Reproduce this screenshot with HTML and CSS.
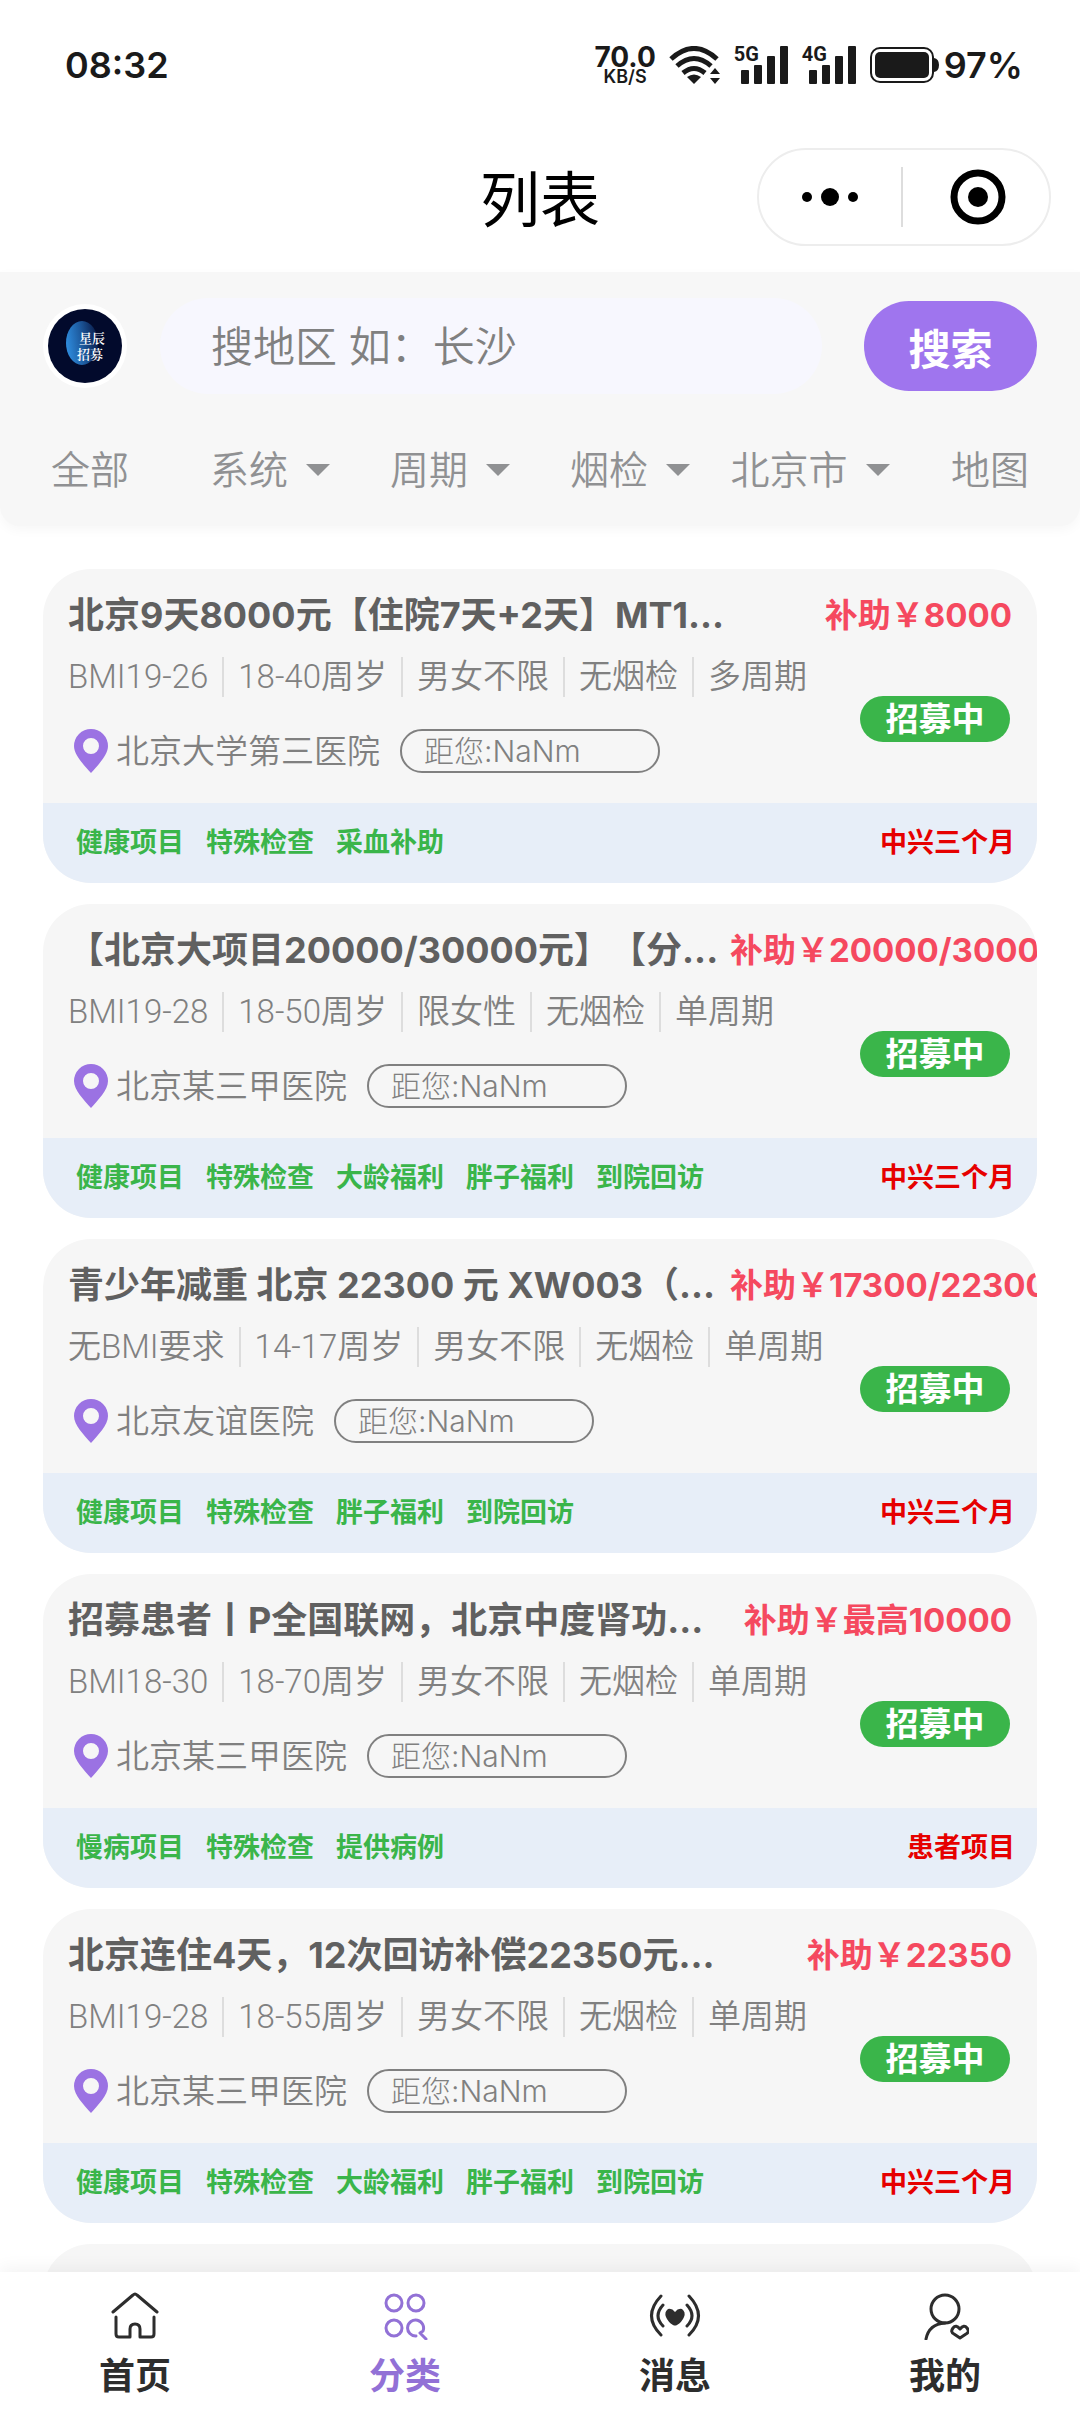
FILE: index.html
```html
<!DOCTYPE html>
<html lang="zh-CN">
<head>
<meta charset="utf-8">
<meta name="viewport" content="width=device-width, initial-scale=1">
<title>列表</title>
<link rel="stylesheet" href="styles.css">
</head>
<body>
<div class="app">
  <header class="top">
    <div class="statusbar">
      <time class="clock">08:32</time>
      <div class="indicators">
        <div class="speed"><b>70.0</b><span>KB/S</span></div>
        <svg class="wifi" width="52" height="38" viewBox="0 0 52 38" fill="none" stroke="#1a1a1a" stroke-width="5">
          <path d="M2 13Q25-8 48 13M8 20Q25 5 42 20M14 27Q25 18 36 27"/>
          <path d="M18 31Q25 26 32 31L25 38Z" fill="#1a1a1a" stroke="none"/>
          <path d="M41 28L46 22L51 28ZM41 32L46 38L51 32Z" fill="#1a1a1a" stroke="none"/>
        </svg>
        <div class="signal"><span class="net">5G</span>
          <svg width="48" height="38" viewBox="0 0 48 38" fill="#1a1a1a"><rect y="24" width="8" height="14" rx="1"/><rect x="13" y="19" width="8" height="19" rx="1"/><rect x="26" y="10" width="8" height="28" rx="1"/><rect x="39" y="0" width="8" height="38" rx="1"/></svg>
        </div>
        <div class="signal"><span class="net">4G</span>
          <svg width="48" height="38" viewBox="0 0 48 38" fill="#1a1a1a"><rect y="24" width="8" height="14" rx="1"/><rect x="13" y="19" width="8" height="19" rx="1"/><rect x="26" y="10" width="8" height="28" rx="1"/><rect x="39" y="0" width="8" height="38" rx="1"/></svg>
        </div>
        <svg class="battery" width="69" height="36" viewBox="0 0 69 36"><rect x="1" y="1" width="62" height="34" rx="9" fill="none" stroke="#1a1a1a" stroke-width="2"/><rect x="5" y="5" width="54" height="26" rx="5" fill="#1a1a1a"/><path d="M64 11Q69 12 69 18Q69 24 64 25Z" fill="#1a1a1a"/></svg>
        <span class="percent">97%</span>
      </div>
    </div>
    <div class="navbar">
      <h1>列表</h1>
      <div class="capsule">
        <button type="button" aria-label="更多"><svg width="58" height="20" viewBox="0 0 58 20"><circle cx="6" cy="10" r="5"/><circle cx="29" cy="10" r="9"/><circle cx="52" cy="10" r="5"/></svg></button>
        <button type="button" aria-label="关闭"><svg width="56" height="56" viewBox="0 0 56 56"><circle cx="28" cy="28" r="24" fill="none" stroke="#000" stroke-width="7"/><circle cx="28" cy="28" r="10"/></svg></button>
      </div>
    </div>
  </header>

  <section class="filters">
    <form class="search">
      <svg class="avatar" width="84" height="84" viewBox="0 0 84 84" role="img" aria-label="星辰招募">
        <defs><linearGradient id="planet" x1="0" y1="0.6" x2="1" y2="0.4"><stop offset="0" stop-color="#2f8ee0"/><stop offset="0.5" stop-color="#1d5a9e"/><stop offset="1" stop-color="#0a1c4a"/></linearGradient></defs>
        <circle cx="42" cy="42" r="42" fill="#fff"/>
        <circle cx="42" cy="42" r="37" fill="#020a2c"/>
        <ellipse cx="39" cy="39" rx="16" ry="22" fill="url(#planet)"/>
        <text x="36" y="39">星辰</text><text x="34" y="55">招募</text>
      </svg>
      <input type="text" aria-label="搜地区" placeholder="搜地区 如：长沙">
      <button type="button">搜索</button>
    </form>
    <nav class="tabs">
      <button type="button">全部</button>
      <button type="button" class="drop">系统</button>
      <button type="button" class="drop">周期</button>
      <button type="button" class="drop">烟检</button>
      <button type="button" class="drop">北京市</button>
      <button type="button">地图</button>
    </nav>
  </section>

  <main class="list">
    <article class="card">
      <div class="body">
        <div class="head"><h2>北京9天8000元【住院7天+2天】MT1...</h2><strong class="price">补助￥8000</strong></div>
        <div class="info">
          <ul class="facts"><li>BMI19-26</li><li>18-40周岁</li><li>男女不限</li><li>无烟检</li><li>多周期</li></ul>
          <div class="place"><svg class="pin" viewBox="0 0 34 44"><path fill-rule="evenodd" d="M17 0A17 17 0 0 0 0 17C0 26 10 36 17 44C24 36 34 26 34 17A17 17 0 0 0 17 0ZM17 9A8 8 0 1 1 17 25A8 8 0 1 1 17 9Z"/></svg><span>北京大学第三医院</span><span class="distance">距您:NaNm</span></div>
          <span class="state">招募中</span>
        </div>
      </div>
      <div class="foot"><ul class="tags"><li>健康项目</li><li>特殊检查</li><li>采血补助</li></ul><span class="period">中兴三个月</span></div>
    </article>

    <article class="card">
      <div class="body">
        <div class="head"><h2>【北京大项目20000/30000元】【分...</h2><strong class="price">补助￥20000/30000</strong></div>
        <div class="info">
          <ul class="facts"><li>BMI19-28</li><li>18-50周岁</li><li>限女性</li><li>无烟检</li><li>单周期</li></ul>
          <div class="place"><svg class="pin" viewBox="0 0 34 44"><path fill-rule="evenodd" d="M17 0A17 17 0 0 0 0 17C0 26 10 36 17 44C24 36 34 26 34 17A17 17 0 0 0 17 0ZM17 9A8 8 0 1 1 17 25A8 8 0 1 1 17 9Z"/></svg><span>北京某三甲医院</span><span class="distance">距您:NaNm</span></div>
          <span class="state">招募中</span>
        </div>
      </div>
      <div class="foot"><ul class="tags"><li>健康项目</li><li>特殊检查</li><li>大龄福利</li><li>胖子福利</li><li>到院回访</li></ul><span class="period">中兴三个月</span></div>
    </article>

    <article class="card">
      <div class="body">
        <div class="head"><h2>青少年减重 北京 22300 元 XW003（...</h2><strong class="price">补助￥17300/22300</strong></div>
        <div class="info">
          <ul class="facts"><li>无BMI要求</li><li>14-17周岁</li><li>男女不限</li><li>无烟检</li><li>单周期</li></ul>
          <div class="place"><svg class="pin" viewBox="0 0 34 44"><path fill-rule="evenodd" d="M17 0A17 17 0 0 0 0 17C0 26 10 36 17 44C24 36 34 26 34 17A17 17 0 0 0 17 0ZM17 9A8 8 0 1 1 17 25A8 8 0 1 1 17 9Z"/></svg><span>北京友谊医院</span><span class="distance">距您:NaNm</span></div>
          <span class="state">招募中</span>
        </div>
      </div>
      <div class="foot"><ul class="tags"><li>健康项目</li><li>特殊检查</li><li>胖子福利</li><li>到院回访</li></ul><span class="period">中兴三个月</span></div>
    </article>

    <article class="card">
      <div class="body">
        <div class="head"><h2>招募患者丨P全国联网，北京中度肾功...</h2><strong class="price">补助￥最高10000</strong></div>
        <div class="info">
          <ul class="facts"><li>BMI18-30</li><li>18-70周岁</li><li>男女不限</li><li>无烟检</li><li>单周期</li></ul>
          <div class="place"><svg class="pin" viewBox="0 0 34 44"><path fill-rule="evenodd" d="M17 0A17 17 0 0 0 0 17C0 26 10 36 17 44C24 36 34 26 34 17A17 17 0 0 0 17 0ZM17 9A8 8 0 1 1 17 25A8 8 0 1 1 17 9Z"/></svg><span>北京某三甲医院</span><span class="distance">距您:NaNm</span></div>
          <span class="state">招募中</span>
        </div>
      </div>
      <div class="foot"><ul class="tags"><li>慢病项目</li><li>特殊检查</li><li>提供病例</li></ul><span class="period">患者项目</span></div>
    </article>

    <article class="card">
      <div class="body">
        <div class="head"><h2>北京连住4天，12次回访补偿22350元...</h2><strong class="price">补助￥22350</strong></div>
        <div class="info">
          <ul class="facts"><li>BMI19-28</li><li>18-55周岁</li><li>男女不限</li><li>无烟检</li><li>单周期</li></ul>
          <div class="place"><svg class="pin" viewBox="0 0 34 44"><path fill-rule="evenodd" d="M17 0A17 17 0 0 0 0 17C0 26 10 36 17 44C24 36 34 26 34 17A17 17 0 0 0 17 0ZM17 9A8 8 0 1 1 17 25A8 8 0 1 1 17 9Z"/></svg><span>北京某三甲医院</span><span class="distance">距您:NaNm</span></div>
          <span class="state">招募中</span>
        </div>
      </div>
      <div class="foot"><ul class="tags"><li>健康项目</li><li>特殊检查</li><li>大龄福利</li><li>胖子福利</li><li>到院回访</li></ul><span class="period">中兴三个月</span></div>
    </article>

    <article class="card">
      <div class="body"></div>
    </article>
  </main>

  <nav class="tabbar">
    <a href="#home"><svg viewBox="0 0 48 48"><path d="M2 20L22 3Q24 1 26 3L46 20M5 25V42Q5 45 8 45H19V37Q19 32 24 32Q29 32 29 37V45H40Q43 45 43 42V25"/></svg><span>首页</span></a>
    <a href="#category" class="active"><svg viewBox="0 0 48 48"><circle cx="13" cy="11" r="8"/><circle cx="35" cy="11" r="8"/><circle cx="13" cy="36" r="8"/><path d="M35 44A8 8 0 1 1 42 39L39 41L45 47"/></svg><span>分类</span></a>
    <a href="#message"><svg viewBox="0 0 52 48"><path d="M12 4Q-7 24 12 43M14 13Q4 24 14 34M40 4Q59 24 40 43M38 13Q48 24 38 34"/><path class="solid" d="M26 20Q29 16 33 17Q37 20 35 25Q33 30 28 33Q26 34 24 33Q19 30 17 25Q15 20 19 17Q23 16 26 20Z"/></svg><span>消息</span></a>
    <a href="#mine"><svg viewBox="0 0 48 48"><circle cx="24" cy="17" r="14"/><path d="M5 47Q8 32 24 31M39 37Q43 32 46 36Q49 40 45 42L39 46L33 42Q29 40 32 36Q35 32 39 37Z"/></svg><span>我的</span></a>
  </nav>
</div>
</body>
</html>
```
FILE: styles.css
```css
* { box-sizing: border-box; margin: 0; padding: 0; }

body {
  background: #fff;
  color: #808080;
  font-family: Inter, "Noto Sans CJK SC", sans-serif;
  text-spacing-trim: space-all;
}

button { border: 0; background: none; font: inherit; color: inherit; }
ul { list-style: none; }
svg { flex: none; display: block; }

.app { display: flex; flex-direction: column; height: 100vh; }

/* status bar and page title */
.statusbar {
  display: flex;
  align-items: center;
  justify-content: space-between;
  height: 130px;
  padding: 0 57px 0 65px;
  color: #1a1a1a;
}
.clock, .percent { font-size: 36px; font-weight: 600; line-height: 40px; }
.indicators { display: flex; align-items: center; gap: 13px; }
.speed { display: flex; flex-direction: column; align-items: center; }
.speed b { font-size: 28px; line-height: 24px; font-weight: 700; }
.speed span { font-size: 18px; line-height: 16px; font-weight: 600; }
.signal { position: relative; padding-left: 7px; }
.net { position: absolute; left: 0; top: 0; font: 700 20px/16px "Roboto", sans-serif; }
.percent { margin-left: -8px; }

.navbar {
  display: grid;
  grid-template-columns: 1fr auto 1fr;
  align-items: center;
  height: 142px;
  padding: 0 29px 8px;
}
.navbar h1 { grid-column: 2; padding-top: 6px; font-size: 60px; line-height: 80px; font-weight: 400; color: #000; }
.capsule {
  justify-self: end;
  display: flex;
  align-items: center;
  width: 294px;
  height: 98px;
  border: 2px solid #ededed;
  border-radius: 49px;
}
.capsule button { flex: 1; height: 60px; display: flex; align-items: center; justify-content: center; }
.capsule button + button { padding-left: 4px; border-left: 2px solid #ddd; }

/* search and filters */
.filters {
  padding: 26px 0 28px;
  background: #f7f7f7;
  border-radius: 0 0 20px 20px;
  box-shadow: 0 4px 12px #f7f7f7;
}
.search { display: flex; align-items: center; padding: 0 43px; }
.avatar text { fill: #fff; font: 600 13px "Noto Serif CJK SC", "Noto Sans CJK SC", serif; }
.search input {
  flex: 1;
  min-width: 0;
  height: 96px;
  margin: 0 42px 0 33px;
  padding: 0 51px;
  border: 0;
  border-radius: 48px;
  background: #f7f7fe;
  font: 350 42px/56px Inter, "Noto Sans CJK SC", sans-serif;
}
.search input::placeholder { color: #808080; opacity: 1; }
.search button {
  width: 173px;
  height: 90px;
  border-radius: 45px;
  background: #9f75ee;
  color: #fff;
  font-size: 42px;
  font-weight: 700;
}
.tabs { display: flex; padding-top: 48px; }
.tabs button {
  flex: 1;
  display: flex;
  align-items: center;
  justify-content: center;
  gap: 18px;
  font-size: 39px;
  line-height: 56px;
  font-weight: 350;
  color: #909193;
}
.drop::after {
  content: "";
  border: 12px solid transparent;
  border-top-color: #909193;
  border-bottom: 0;
}

/* project cards */
.list {
  flex: 1;
  min-height: 0;
  overflow: auto;
  scrollbar-width: none;
  display: flex;
  flex-direction: column;
  gap: 21px;
  padding: 43px 43px 21px;
}
.card { flex: none; overflow: hidden; border-radius: 48px; background: #f6f6f6; }
.body { min-height: 234px; padding: 24px 25px 0; }
.head { display: flex; align-items: center; height: 44px; white-space: nowrap; }
.head h2 { flex: 1; min-width: 0; font-size: 36px; line-height: 44px; font-weight: 700; color: #606060; }
.price { width: 282px; text-align: right; font-size: 33px; line-height: 44px; font-weight: 700; color: #f5495f; }
.info {
  display: grid;
  grid-template-columns: 1fr auto;
  align-items: center;
  padding-top: 20px;
}
.facts, .place { grid-column: 1; display: flex; align-items: center; font-size: 33px; font-weight: 350; line-height: 40px; white-space: nowrap; }
.facts { font-family: Roboto, "Noto Sans CJK SC", sans-serif; }
.facts li + li { margin-left: 14px; padding-left: 14px; border-left: 2px solid #ddd; }
.place { padding-top: 32px; }
.pin { width: 34px; height: 44px; margin: 0 8px 0 6px; fill: #9b72e3; }
.distance {
  width: 260px;
  height: 44px;
  margin-left: 20px;
  padding-left: 22px;
  border: 2px solid #808080;
  border-radius: 22px;
  font-size: 30px;
  font-weight: 300;
}
.state {
  grid-area: 1 / 2 / 3 / 3;
  width: 150px;
  margin: 8px 2px 0 0;
  border-radius: 23px;
  background: #3ab54a;
  color: #fff;
  text-align: center;
  font-size: 33px;
  line-height: 46px;
  font-weight: 700;
}
.foot {
  display: flex;
  align-items: center;
  justify-content: space-between;
  height: 80px;
  padding: 0 22px 0 33px;
  background: #e7eef8;
  font-size: 27px;
  font-weight: 700;
  line-height: 36px;
}
.tags { display: flex; gap: 22px; color: #3ab54a; }
.period { color: #e60000; }

/* bottom navigation */
.tabbar {
  position: relative;
  display: flex;
  height: 142px;
  padding-top: 20px;
  background: #fff;
  box-shadow: 0 -4px 16px #0000000d;
}
.tabbar a {
  flex: 1;
  display: flex;
  flex-direction: column;
  align-items: center;
  gap: 12px;
  color: #2d2d2d;
  text-decoration: none;
  font-size: 36px;
  font-weight: 600;
  line-height: 48px;
}
.tabbar a.active { color: #9271d6; }
.tabbar svg { height: 48px; fill: none; stroke: currentColor; stroke-width: 3; stroke-linecap: round; stroke-linejoin: round; }
.tabbar .solid { fill: currentColor; stroke: none; }
```
